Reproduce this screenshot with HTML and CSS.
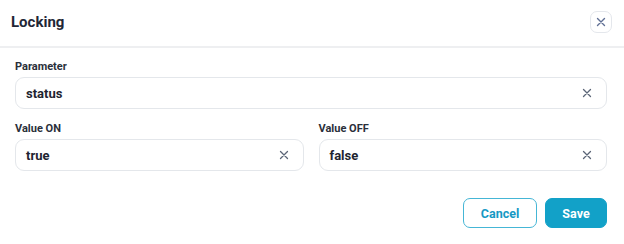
FILE: index.html
```html
<!DOCTYPE html>
<html>
<head>
<meta charset="utf-8">
<link rel="stylesheet" href="styles.css">
</head>
<body>
<div class="dialog">
  <div class="header">
    <div class="title">Locking</div>
    <button class="close" aria-label="Close">
      <svg width="10" height="10" viewBox="0 0 10 10"><path d="M1.5 1.5 L8.5 8.5 M8.5 1.5 L1.5 8.5" stroke="#5f6f94" stroke-width="1.4" stroke-linecap="round" fill="none"/></svg>
    </button>
  </div>
  <div class="body">
    <div class="field">
      <label class="label">Parameter</label>
      <div class="input"><span class="value">status</span>
        <svg class="clear" width="10" height="10" viewBox="0 0 10 10"><path d="M1.5 1.5 L8.5 8.5 M8.5 1.5 L1.5 8.5" stroke="#5b6577" stroke-width="1.3" stroke-linecap="round" fill="none"/></svg>
      </div>
    </div>
    <div class="row">
      <div class="field">
        <label class="label">Value ON</label>
        <div class="input"><span class="value">true</span>
          <svg class="clear" width="10" height="10" viewBox="0 0 10 10"><path d="M1.5 1.5 L8.5 8.5 M8.5 1.5 L1.5 8.5" stroke="#5b6577" stroke-width="1.3" stroke-linecap="round" fill="none"/></svg>
        </div>
      </div>
      <div class="field">
        <label class="label">Value OFF</label>
        <div class="input"><span class="value">false</span>
          <svg class="clear" width="10" height="10" viewBox="0 0 10 10"><path d="M1.5 1.5 L8.5 8.5 M8.5 1.5 L1.5 8.5" stroke="#5b6577" stroke-width="1.3" stroke-linecap="round" fill="none"/></svg>
        </div>
      </div>
    </div>
  </div>
  <div class="footer">
    <button class="btn cancel">Cancel</button>
    <button class="btn save">Save</button>
  </div>
</div>
</body>
</html>
```
FILE: styles.css
```css
* { box-sizing: border-box; }
html, body { margin: 0; padding: 0; background: #ffffff; }
body { font-family: Roboto, "Liberation Sans", Arial, sans-serif; color: #1f2633; }
.dialog { width: 624px; height: 244px; background: #fff; }
.header {
  height: 48px;
  border-bottom: 2px solid #eeeff1;
  display: flex;
  align-items: center;
  justify-content: space-between;
  padding: 0 12px 2px 11px;
}
.title { font-size: 15px; font-weight: 700; color: #1f2736; }
.close {
  width: 22px; height: 22px;
  border: 1px solid #e4e7ec;
  border-radius: 7px;
  background: #fff;
  display: flex; align-items: center; justify-content: center;
  padding: 0;
}
.body { padding: 12px 17px 0 15px; display: flex; flex-direction: column; gap: 13px; }
.row { display: flex; gap: 15px; }
.row .field { flex: 1; }
.field { display: flex; flex-direction: column; }
.label { font-size: 11px; line-height: 14px; font-weight: 700; color: #2a2f3a; margin-bottom: 3px; }
.input {
  height: 32px;
  border: 1px solid #e4e7eb;
  border-radius: 9px;
  display: flex; align-items: center; justify-content: space-between;
  padding: 0 14px 0 10px;
}
.value { font-size: 13px; font-weight: 700; color: #1e2430; }
.footer { display: flex; justify-content: flex-end; gap: 8px; padding: 27px 17px 0 0; }
.btn {
  height: 30px;
  border-radius: 7px;
  font-family: Roboto, "Liberation Sans", Arial, sans-serif;
  font-size: 12.5px; font-weight: 700;
  padding: 0;
}
.cancel { width: 74px; background: #fff; border: 1px solid #45b6d6; color: #1699c4; }
.save { width: 62px; background: #12a1c8; border: 1px solid #12a1c8; color: #fff; }
```
